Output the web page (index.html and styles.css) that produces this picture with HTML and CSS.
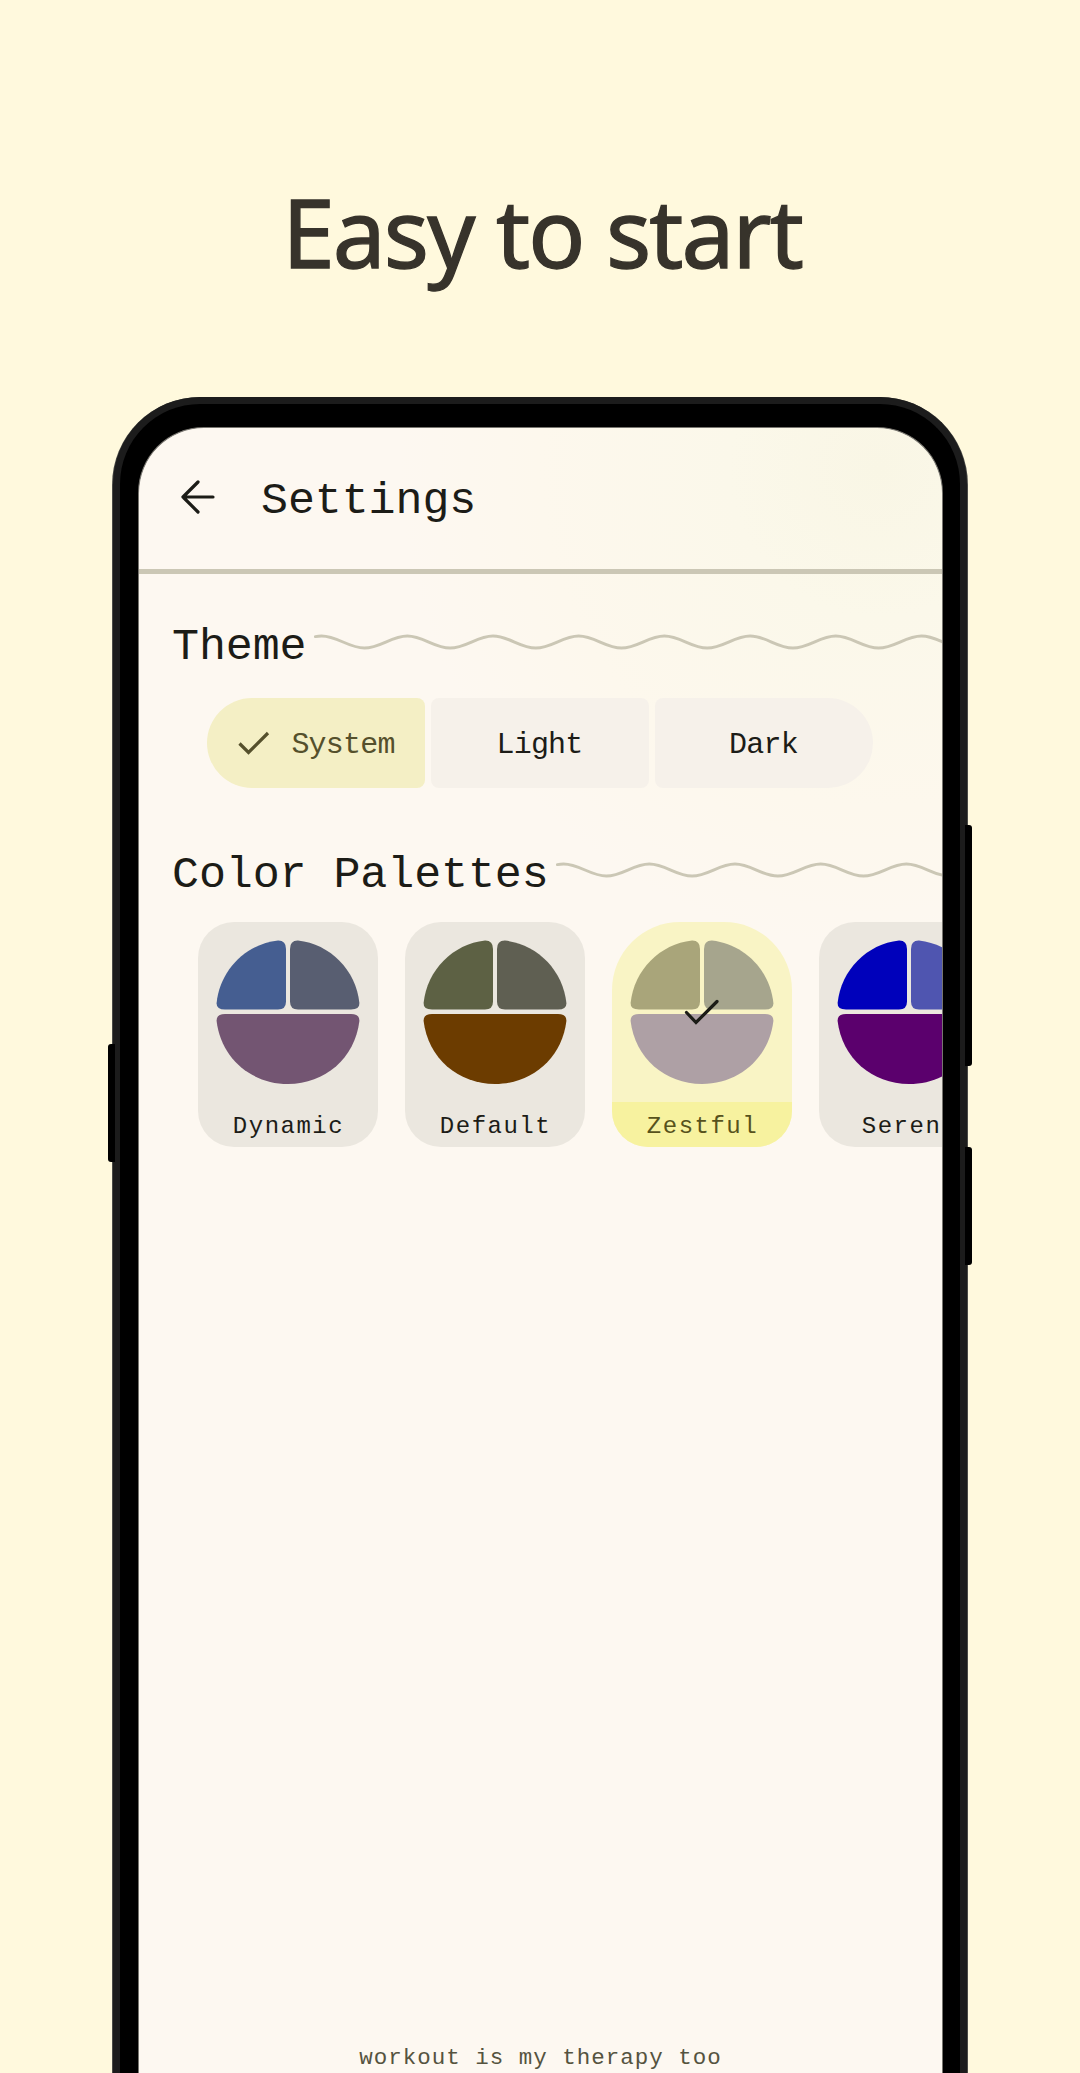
FILE: index.html
```html
<!DOCTYPE html>
<html lang="en">
<head>
<meta charset="utf-8">
<title>Easy to start</title>
<link rel="stylesheet" href="styles.css">
</head>
<body>
<svg class="defs" aria-hidden="true">
  <symbol id="check" viewBox="0 0 36 36"><path d="M3.5 18.5 L12.5 27.5 L32 8" fill="none" stroke="currentColor" stroke-width="3.2"/></symbol>
  <symbol id="pie" viewBox="0 0 144 144">
    <path class="a" d="M0.6 63 C4 30 30 4 62 0.5 Q70 0.3 70 9 V61.5 Q70 69.5 62 69.5 H9 Q0.3 69.5 0.6 63Z"/>
    <path class="b" d="M143.4 63 C140 30 114 4 82 0.5 Q74 0.3 74 9 V61.5 Q74 69.5 82 69.5 H135 Q143.7 69.5 143.4 63Z"/>
    <path class="c" d="M0.6 81 Q0.3 74 9 74 H135 Q143.7 74 143.4 81 C139 118 109 144 72 144 S5 118 0.6 81Z"/>
  </symbol>
</svg>
<h1 class="headline">Easy to start</h1>
<div class="phone">
  <i class="key key-left"></i><i class="key key-volume"></i><i class="key key-power"></i>
  <main class="screen">
    <header class="bar">
      <svg class="back" width="34" height="34" viewBox="0 0 34 34"><path d="M17 2 L2 17 L17 32 M2 17 H32" fill="none" stroke="currentColor" stroke-width="3.2" stroke-linecap="round" stroke-linejoin="round"/></svg>
      <h2>Settings</h2>
    </header>
    <section class="theme">
      <div class="heading">
        <h2>Theme</h2>
        <svg class="wave" width="660" height="16" viewBox="0 0 660 16"><path d="M1.5 2.6 Q4.5 2 7.6 2 C23.2 2 34.8 14 50.4 14 S77.6 2 93.3 2 S120.5 14 136.1 14 S163.3 2 179 2 S206.2 14 221.8 14 S249 2 264.7 2 S291.9 14 307.5 14 S334.7 2 350.4 2 S377.6 14 393.2 14 S420.4 2 436.1 2 S463.3 14 478.9 14 S506.1 2 521.8 2 S549 14 564.6 14 S591.8 2 607.5 2 S634.7 14 650.3 14"/></svg>
      </div>
      <div class="segments">
        <button class="segment selected"><svg width="36" height="36"><use href="#check"/></svg><span>System</span></button>
        <button class="segment"><span>Light</span></button>
        <button class="segment"><span>Dark</span></button>
      </div>
    </section>
    <section class="palettes">
      <div class="heading">
        <h2>Color Palettes</h2>
        <svg class="wave" width="660" height="16" viewBox="0 0 660 16"><path d="M1.5 2.6 Q4.5 2 7.6 2 C23.2 2 34.8 14 50.4 14 S77.6 2 93.3 2 S120.5 14 136.1 14 S163.3 2 179 2 S206.2 14 221.8 14 S249 2 264.7 2 S291.9 14 307.5 14 S334.7 2 350.4 2 S377.6 14 393.2 14 S420.4 2 436.1 2"/></svg>
      </div>
      <div class="cards">
        <div class="card dynamic"><svg class="pie"><use href="#pie"/></svg><span>Dynamic</span></div>
        <div class="card default"><svg class="pie"><use href="#pie"/></svg><span>Default</span></div>
        <div class="card zestful"><svg class="pie"><use href="#pie"/></svg><svg class="tick" viewBox="0 0 36 36"><path d="M3.5 17.5 L13 27.5 L34 6.5" fill="none" stroke="currentColor" stroke-width="3.2" stroke-linecap="round"/></svg><span>Zestful</span></div>
        <div class="card serene"><svg class="pie"><use href="#pie"/></svg><span>Serene</span></div>
      </div>
    </section>
    <p class="motto">workout is my therapy too</p>
  </main>
</div>
</body>
</html>
```
FILE: styles.css
```css
* { box-sizing: border-box; }
html, body { margin: 0; height: 2073px; overflow: hidden; }
body {
  background: #fff9dd;
  font-family: "Liberation Mono", monospace;
  color: #1c1c17;
  display: flex;
  flex-direction: column;
  align-items: center;
}
.defs { position: absolute; width: 0; height: 0; }
h1, h2, p { margin: 0; font-weight: 400; }
.headline {
  padding: 172px 0 0 4px;
  height: 397px;
  flex: none;
  font: 400 94.5px/120px "Noto Sans", sans-serif;
  letter-spacing: -1.95px;
  -webkit-text-stroke: 1.3px #37332b;
  color: #37332b;
  white-space: nowrap;
}
.phone {
  position: relative;
  flex: none;
  width: 854px;
  height: 1676px;
  padding: 23px 17px 0 18px;
  border: 7px solid #1c1c1c;
  border-bottom: 0;
  border-radius: 87px 87px 0 0;
  background: #000;
  box-shadow: 0 1px 0 1px #4a4a46;
}
.key { position: absolute; width: 7px; background: #000; }
.key-left { left: -12px; top: 640px; height: 118px; border-radius: 3px 0 0 3px; }
.key-volume { right: -12px; top: 421px; height: 241px; border-radius: 0 3px 3px 0; }
.key-power { right: -12px; top: 743px; height: 118px; border-radius: 0 3px 3px 0; }
.screen {
  height: 1646px;
  overflow: hidden;
  display: flex;
  flex-direction: column;
  border: 1px solid #77756f;
  border-bottom: 0;
  border-radius: 66px 66px 0 0;
  background: radial-gradient(circle at 740px 40px, #f9f6e5 0, #fbf8ea 150px, #fdf8ed 340px, #fdf8f1 480px);
}
.bar {
  flex: none;
  height: 146px;
  border-bottom: 5px solid #cbc7b5;
  display: flex;
  align-items: flex-start;
  padding: 44px 0 0 42px;
  gap: 46px;
}
.back { margin-top: 8px; }
h2 { font-size: 45px; line-height: 60px; letter-spacing: -0.1px; white-space: nowrap; }
.heading { display: flex; padding-left: 33px; }
.wave { flex: none; margin: 16px 0 0 7px; }
.wave path { fill: none; stroke: #cbc7b5; stroke-width: 3; stroke-linecap: round; }
.theme { padding-top: 44px; }
.segments { display: flex; gap: 6px; margin: 20px 0 0 68px; width: 666px; }
.segment {
  flex: 1;
  height: 90px;
  border: 0;
  padding: 0;
  border-radius: 8px;
  background: #f6f1ea;
  font: 30px/40px "Liberation Mono", monospace;
  letter-spacing: -0.8px;
  color: #1c1c17;
  display: flex;
  align-items: center;
  justify-content: center;
  gap: 19px;
}
.segment span { padding: 3px 1px 0 0; }
.segment:first-child { border-radius: 45px 8px 8px 45px; }
.segment:last-child { border-radius: 8px 45px 45px 8px; }
.segment.selected { background: #f4efc5; color: #55502c; }
.palettes { padding-top: 58px; }
.palettes .heading { height: 76px; }
.cards { display: flex; gap: 27px; padding-left: 59px; }
.card {
  position: relative;
  flex: none;
  width: 180px;
  height: 225px;
  overflow: hidden;
  border-radius: 36px;
  background: #ebe7df;
  display: flex;
  flex-direction: column;
  align-items: center;
  padding-top: 18px;
}
.pie { width: 144px; height: 144px; flex: none; }
.a { fill: var(--a); }
.b { fill: var(--b); }
.c { fill: var(--c); }
.card span {
  margin-top: 18px;
  width: 100%;
  height: 45px;
  padding-left: 1px;
  text-align: center;
  font-size: 24px;
  line-height: 49px;
  letter-spacing: 1.5px;
}
.dynamic { --a: #455e91; --b: #585e71; --c: #735572; }
.default { --a: #5d6144; --b: #5f5f52; --c: #6c3c00; }
.serene { --a: #0001bb; --b: #4f55b0; --c: #5b006d; }
.zestful {
  --a: #a9a57a; --b: #a6a58d; --c: #aea0a5;
  background: #f9f4c5;
  border-radius: 68px 68px 36px 36px;
}
.zestful span { background: #f7f29f; color: #57521c; }
.tick { position: absolute; left: 71px; top: 73px; width: 36px; height: 36px; }
.motto {
  margin-top: auto;
  padding-bottom: 1px;
  text-align: center;
  font-size: 22.5px;
  line-height: 28px;
  letter-spacing: 1px;
  color: #55533f;
}
```
